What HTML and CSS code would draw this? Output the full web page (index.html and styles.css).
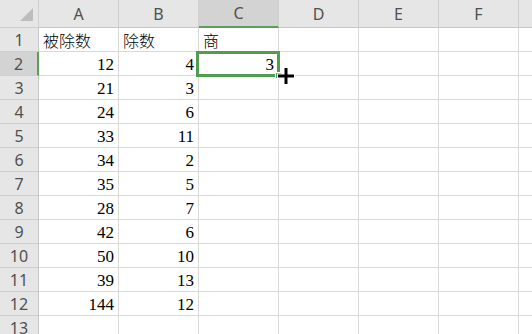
FILE: index.html
```html
<!DOCTYPE html>
<html lang="zh-CN">
<head>
    <meta charset="UTF-8">
    <title>除法表</title>
    <link rel="stylesheet" href="styles.css">
</head>
<body>
    <div class="sheet-wrap">
        <div class="sheet" id="sheet"></div>

        <!-- Active cell C2 with its fill handle and the cross cursor -->
        <div class="selection"></div>
        <div class="fill-handle"></div>
        <div class="cursor">
            <svg width="20" height="20" viewBox="0 0 20 20">
                <path d="M10 1V19M1 10H19" stroke="#fff" stroke-width="5"/>
                <path d="M10 2V18M2 10H18" stroke="#000" stroke-width="3"/>
            </svg>
        </div>
    </div>

    <script>
        const columns = ['A', 'B', 'C', 'D', 'E', 'F', 'G'];
        const rows = [
            ['被除数', '除数', '商'],
            [12, 4, 3],
            [21, 3],
            [24, 6],
            [33, 11],
            [34, 2],
            [35, 5],
            [28, 7],
            [42, 6],
            [50, 10],
            [39, 13],
            [144, 12],
            []
        ];

        const sheet = document.getElementById('sheet');

        function addCell(className, text) {
            const cell = document.createElement('div');
            cell.className = className;
            if (text !== undefined) cell.textContent = text;
            sheet.appendChild(cell);
        }

        // Column header row (G is off the right edge, so it stays empty)
        addCell('corner');
        columns.forEach(function(letter) {
            const label = letter === 'G' ? '' : letter;
            addCell(letter === 'C' ? 'col-head active' : 'col-head', label);
        });

        // Data rows
        rows.forEach(function(values, i) {
            addCell(i === 1 ? 'row-head active' : 'row-head', i + 1);
            columns.forEach(function(letter, j) {
                const value = values[j];
                if (value === undefined) {
                    addCell('cell');
                } else if (typeof value === 'number') {
                    addCell('cell num', value);
                } else {
                    addCell('cell text', value);
                }
            });
        });
    </script>
</body>
</html>
```

FILE: styles.css
```css
/* Page */
body {
    margin: 0;
    background-color: #fff;
    overflow: hidden;
}

.sheet-wrap {
    position: relative;
    width: 532px;
    height: 334px;
    overflow: hidden;
}

/* Grid of cells */
.sheet {
    display: grid;
    grid-template-columns: 39px repeat(7, 80px);
    grid-template-rows: 28px;
    grid-auto-rows: 24px;
}

.sheet > div {
    box-sizing: border-box;
    border-right: 1px solid #d9d9d9;
    border-bottom: 1px solid #d9d9d9;
}

/* Top-left corner */
.corner {
    position: relative;
    background-color: #e6e6e6;
    border-color: #cfcfcf !important;
}

.corner::after {
    content: "";
    position: absolute;
    right: 5px;
    bottom: 6px;
    width: 0;
    height: 0;
    border-left: 13px solid transparent;
    border-bottom: 13px solid #bdbdbd;
}

/* Headers */
.col-head,
.row-head {
    background-color: #e6e6e6;
    color: #505050;
    font-family: "Noto Sans", sans-serif;
    font-size: 16px;
    display: flex;
    align-items: center;
    justify-content: center;
}

.col-head {
    border-right-color: #cfcfcf !important;
    border-bottom-color: #c6c6c6 !important;
}

.row-head {
    border-right-color: #c6c6c6 !important;
    border-bottom-color: #cfcfcf !important;
}

.col-head.active {
    background-color: #d3d3d3;
    border-bottom: 2px solid #5a9e5a !important;
}

.row-head.active {
    background-color: #d3d3d3;
    border-right: 2px solid #5a9e5a !important;
}

/* Body cells */
.cell {
    display: flex;
    align-items: center;
    padding: 0 4px;
    color: #000;
}

.num {
    justify-content: flex-end;
    font-family: "Liberation Serif", serif;
    font-size: 17px;
    padding-top: 3px;
}

.text {
    font-family: "Noto Sans CJK SC", sans-serif;
    font-size: 16px;
    font-weight: 300;
}

/* Active cell marker */
.selection {
    position: absolute;
    left: 196px;
    top: 51px;
    width: 84px;
    height: 26px;
    box-sizing: border-box;
    border: 3px solid #519c51;
}

.fill-handle {
    position: absolute;
    left: 275px;
    top: 72px;
    width: 5px;
    height: 5px;
    background-color: #519c51;
    border: 1px solid #fff;
}

.cursor {
    position: absolute;
    left: 276px;
    top: 66px;
    width: 20px;
    height: 20px;
}
```
